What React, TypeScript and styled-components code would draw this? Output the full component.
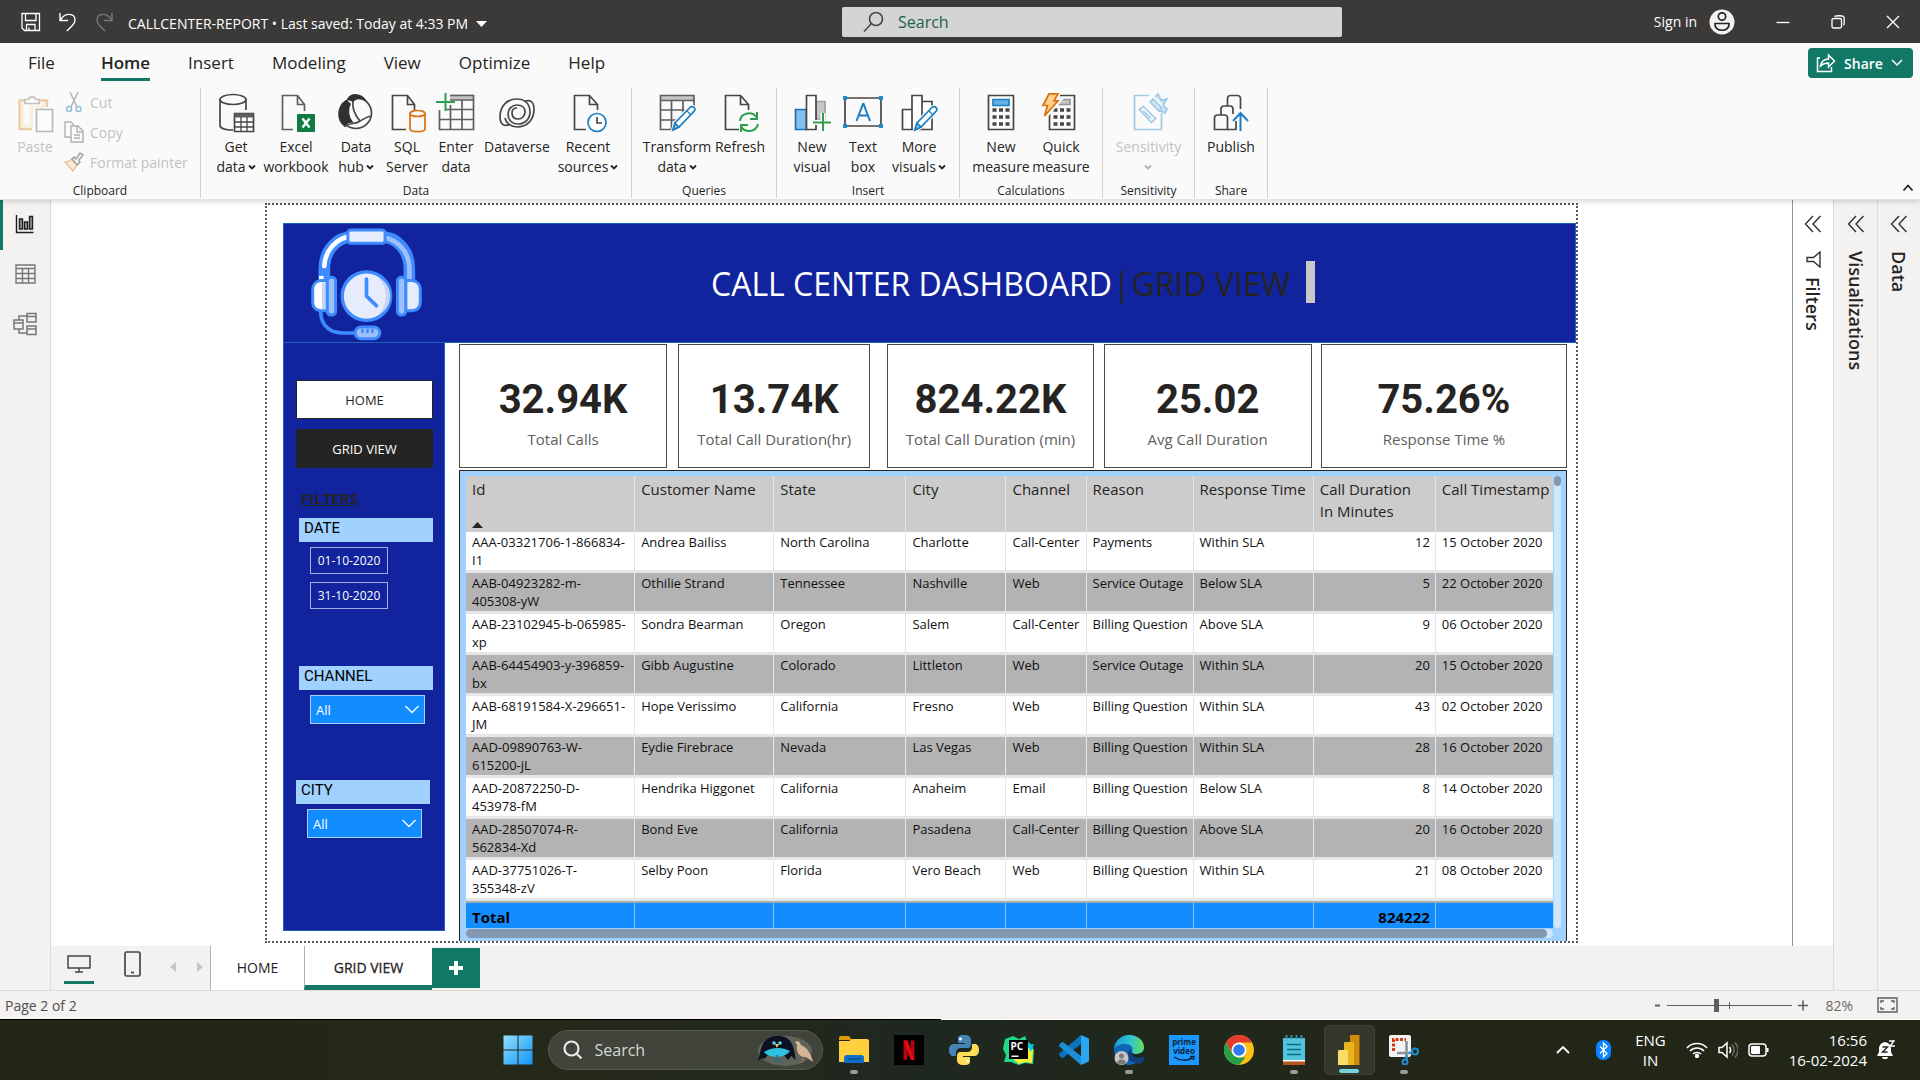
import React from "react";
import styled, { createGlobalStyle, css } from "styled-components";

const ui = `"Open Sans", "Noto Sans", sans-serif`;
const din = `Roboto, "Liberation Sans", sans-serif`;
const green = "#117865";
const navy = "#12239e";
const sky = "#a0d1ff";
const ink = "#252423";

const GlobalStyle = createGlobalStyle`
  *, *::before, *::after { box-sizing: border-box; }
  body { margin: 0; font-family: ${ui}; color: ${ink}; background: #fff; }
  button, input, select { font-family: inherit; margin: 0; }
  button { border: 0; background: none; padding: 0; color: inherit; cursor: pointer; }
  svg { display: block; flex: none; }
`;

const Shell = styled.div`
  display: flex;
  flex-direction: column;
  min-height: 100vh;
`;

/* ---------- title bar ---------- */

const TitleBar = styled.header`
  display: grid;
  grid-template-columns: 842fr 500fr 578fr;
  align-items: center;
  height: 43px;
  background: #3b3a38;
  color: #fff;
  font-size: 14px;
`;

const TitleLeft = styled.div`
  display: flex;
  align-items: center;
  gap: 15px;
  padding-left: 20px;
  white-space: nowrap;
`;

const FileName = styled.button`
  display: flex;
  align-items: center;
  gap: 8px;
  padding-top: 4px;
  font-size: 14px;
  line-height: 20px;
`;

const SearchBox = styled.label`
  display: flex;
  align-items: center;
  gap: 14px;
  height: 30px;
  padding-left: 21px;
  border-radius: 2px;
  background: #d4d4d2;
`;

const SearchInput = styled.input<{ $tone: string }>`
  flex: 1;
  min-width: 0;
  border: 0;
  outline: 0;
  padding: 0;
  background: transparent;
  font-size: 16px;
  line-height: 22px;
  color: ${(p) => p.$tone};
  &::placeholder {
    color: ${(p) => p.$tone};
    opacity: 1;
  }
`;

const TitleRight = styled.div`
  display: flex;
  align-items: center;
  justify-content: flex-end;
  gap: 41px;
  padding-right: 20px;
`;

const SignIn = styled.button`
  display: flex;
  align-items: center;
  gap: 12px;
  font-size: 14px;
`;

/* ---------- ribbon ---------- */

const Ribbon = styled.section`
  position: relative;
  z-index: 1;
  height: 157px;
  background: #fafafa;
  border-bottom: 1px solid #e4e4e4;
  box-shadow: 0 2px 5px rgba(0, 0, 0, 0.14);
`;

const RibbonTop = styled.div`
  display: flex;
  align-items: center;
  justify-content: space-between;
  height: 40px;
  padding: 0 7px 0 28px;
`;

const TabList = styled.nav`
  display: flex;
  gap: 38px;
`;

const RibbonTab = styled.button<{ $active?: boolean }>`
  position: relative;
  font-size: 17px;
  line-height: 24px;
  font-weight: ${(p) => (p.$active ? 600 : 400)};
  margin-left: ${(p) => (p.$active ? 8 : 0)}px;
  ${(p) =>
    p.$active &&
    css`
      &::after {
        content: "";
        position: absolute;
        left: 0;
        right: 0;
        bottom: -6px;
        height: 3px;
        background: ${green};
      }
    `}
`;

const ShareButton = styled.button`
  display: flex;
  align-items: center;
  justify-content: space-between;
  width: 105px;
  height: 30px;
  padding: 0 10px 0 8px;
  border-radius: 4px;
  background: ${green};
  color: #fff;
  font-size: 14px;
  font-weight: 600;
`;

const RibbonBody = styled.div`
  display: flex;
  height: 116px;
  padding: 5px 0 1px;
`;

const Group = styled.section<{ $w: number }>`
  display: flex;
  flex-direction: column;
  justify-content: space-between;
  width: ${(p) => p.$w}px;
  border-right: 1px solid #d2d0ce;
`;

const GroupTools = styled.div<{ $start?: boolean }>`
  display: flex;
  justify-content: ${(p) => (p.$start ? "flex-start" : "center")};
  padding-left: ${(p) => (p.$start ? 10 : 0)}px;
`;

const GroupLabel = styled.div`
  font-size: 12px;
  line-height: 14px;
  text-align: center;
`;

const Tool = styled.button<{ $w: number; $dim?: boolean }>`
  display: flex;
  flex-direction: column;
  align-items: center;
  gap: 4px;
  width: ${(p) => p.$w}px;
  padding-top: 5px;
  font-size: 14px;
  line-height: 20px;
  white-space: nowrap;
  color: ${(p) => (p.$dim ? "#c3c1bf" : ink)};
`;

const ToolText = styled.span`
  display: flex;
  flex-direction: column;
  align-items: center;
`;

const ToolLine = styled.span`
  display: flex;
  align-items: center;
  gap: 2px;
  min-height: 20px;
`;

const MiniTools = styled.div`
  display: flex;
  flex-direction: column;
  padding-left: 4px;
`;

const MiniTool = styled.button`
  display: flex;
  align-items: center;
  gap: 6px;
  height: 30px;
  padding-bottom: 2px;
  font-size: 14px;
  color: #c3c1bf;
`;

const Collapse = styled.button`
  position: absolute;
  right: 6px;
  bottom: 6px;
`;

/* ---------- workspace ---------- */

const Workspace = styled.main`
  display: flex;
  flex: 1;
`;

const Rail = styled.nav`
  display: flex;
  flex-direction: column;
  width: 51px;
  background: #f3f2f1;
  border-right: 1px solid #dddbd9;
`;

const RailButton = styled.button<{ $active?: boolean }>`
  display: flex;
  align-items: center;
  justify-content: center;
  height: 50px;
  padding: 0 3px 2px 0;
  border-left: 3px solid ${(p) => (p.$active ? green : "transparent")};
`;

const Center = styled.div`
  display: flex;
  flex-direction: column;
  flex: 1;
  min-width: 0;
`;

const CanvasRow = styled.div`
  display: flex;
  flex: 1;
`;

const Canvas = styled.div`
  display: flex;
  justify-content: center;
  flex: 1;
  min-width: 0;
  padding: 3px 0;
  background: #fff;
`;

const Page = styled.div`
  display: flex;
  flex-direction: column;
  flex: 0 1 1313px;
  padding: 18px 0 0 16px;
  border: 2px dotted #5a5a5a;
`;

const Banner = styled.div`
  display: flex;
  align-items: center;
  gap: 288px;
  height: 120px;
  padding: 2px 0 0 26px;
  background: ${navy};
  border: 1px solid #1a62bd;
`;

const BannerTitle = styled.h1`
  display: flex;
  align-items: center;
  gap: 1px;
  margin: 0;
  font-size: 32px;
  line-height: 44px;
  font-weight: 400;
  color: #fff;
  white-space: nowrap;
`;

const DarkText = styled.span`
  color: ${ink};
`;

const Marker = styled.span`
  width: 9px;
  height: 42px;
  margin-left: 15px;
  margin-bottom: 4px;
  background: #c8c8c8;
`;

const Report = styled.div`
  display: flex;
  flex: 1;
  gap: 14px;
  padding-right: 9px;
`;

const Side = styled.aside`
  width: 162px;
  margin-bottom: 10px;
  padding: 37px 0 0 12px;
  background: ${navy};
  border: 1px solid #1a62bd;
  border-top: 0;
`;

const NavButtons = styled.div`
  display: flex;
  flex-direction: column;
  gap: 10px;
  width: 137px;
`;

const NavButton = styled.button<{ $dark?: boolean }>`
  height: 39px;
  border: 1px solid ${ink};
  background: ${(p) => (p.$dark ? ink : "#fff")};
  color: ${(p) => (p.$dark ? "#fff" : ink)};
  font-size: 13px;
`;

const SideHeading = styled.h2`
  margin: 19px 0 9px 5px;
  font-size: 15px;
  line-height: 22px;
  font-weight: 700;
  text-decoration: underline;
`;

const Slicer = styled.div<{ $h: number; $indent: number }>`
  height: ${(p) => p.$h}px;
  padding-left: ${(p) => p.$indent}px;
`;

const SlicerTitle = styled.label`
  display: block;
  width: 134px;
  height: 24px;
  padding-left: 5px;
  background: ${sky};
  font-family: ${din};
  font-size: 15px;
  line-height: 20px;
  color: #000;
`;

const SlicerBody = styled.div`
  display: flex;
  flex-direction: column;
  gap: 8px;
  padding: 5px 0 0 11px;
`;

const DateInput = styled.input`
  width: 78px;
  height: 27px;
  padding: 0;
  border: 1px solid #a5aee2;
  background: transparent;
  color: #fff;
  font-size: 12px;
  text-align: center;
`;

const SelectWrap = styled.div`
  position: relative;
  width: 115px;
`;

const Select = styled.select`
  appearance: none;
  width: 100%;
  height: 29px;
  padding: 0 5px;
  border: 1px solid #a9cff8;
  border-radius: 0;
  background: #118dff;
  color: #fff;
  font-size: 13px;
`;

const SelectArrow = styled.span`
  position: absolute;
  right: 6px;
  top: 10px;
  pointer-events: none;
`;

const ReportMain = styled.div`
  display: flex;
  flex-direction: column;
  flex: 1;
  min-width: 0;
  gap: 2px;
  padding-top: 1px;
`;

const Cards = styled.div`
  display: grid;
  grid-template-columns: 219fr 209fr 216fr 217fr 246fr;
`;

const Card = styled.article<{ $gap: number }>`
  display: flex;
  flex-direction: column;
  align-items: center;
  height: 124px;
  margin-right: ${(p) => p.$gap}px;
  padding-top: 31px;
  border: 1px solid #4a4948;
  background: #fff;
  white-space: nowrap;
`;

const CardValue = styled.div`
  font-family: ${din};
  font-size: 40px;
  line-height: 48px;
  font-weight: 700;
`;

const CardLabel = styled.div`
  margin-top: 5px;
  font-size: 15px;
  line-height: 20px;
  color: #605e5c;
`;

const TableVisual = styled.section`
  display: grid;
  grid-template-columns: minmax(0, 1fr) 7px;
  grid-template-rows: auto 10px;
  align-content: start;
  column-gap: 1px;
  flex: 1;
  padding: 5px 5px 0 6px;
  background: ${sky};
  border: 1px solid ${ink};
  border-bottom: 0;
`;

const DataTable = styled.table`
  width: 100%;
  table-layout: fixed;
  border-collapse: separate;
  border-spacing: 0;
  font-size: 13px;
  line-height: 18px;
  color: #111;
`;

const Th = styled.th`
  position: relative;
  height: 56px;
  padding: 2px 0 0 6px;
  vertical-align: top;
  text-align: left;
  font-size: 15px;
  line-height: 22px;
  font-weight: 400;
  white-space: pre-line;
  color: ${ink};
  background: #ccc;
  border-right: 1px solid #e3e6ea;
  &:last-child {
    border-right: 0;
  }
`;

const SortMark = styled.span`
  position: absolute;
  left: 6px;
  bottom: 4px;
`;

const Row = styled.tr<{ $alt?: boolean }>`
  background: ${(p) => (p.$alt ? "#b3b3b3" : "#fff")};
`;

const Td = styled.td<{ $num?: boolean }>`
  height: 41px;
  padding: 1px 5px 0 6px;
  vertical-align: top;
  white-space: nowrap;
  text-align: ${(p) => (p.$num ? "right" : "left")};
  border-right: 1px solid #e3e6ea;
  border-bottom: 3px solid #e6e6e6;
  &:last-child {
    border-right: 0;
  }
`;

const TotalCell = styled.td<{ $num?: boolean }>`
  height: 27px;
  padding: 2px 5px 0 6px;
  font-size: 15px;
  line-height: 22px;
  font-weight: 700;
  color: #000;
  text-align: ${(p) => (p.$num ? "right" : "left")};
  background: #118dff;
  border-top: 2px solid #a6abb0;
  border-right: 1px solid #8cc4f8;
  &:last-child {
    border-right: 0;
  }
`;

const VScroll = styled.div`
  border-radius: 4px;
  background: #cfe6ff;
`;

const VThumb = styled.div`
  height: 10px;
  border-radius: 4px;
  background: #8397b0;
`;

const HScroll = styled.div`
  padding-right: 6px;
  margin-top: 1px;
  height: 9px;
  border-radius: 5px;
  background: #cfe6ff;
`;

const HThumb = styled.div`
  height: 9px;
  border-radius: 5px;
  background: #8397b0;
`;

/* ---------- side panes ---------- */

const Pane = styled.aside<{ $white?: boolean; $w: number }>`
  display: flex;
  flex-direction: column;
  align-items: center;
  gap: 18px;
  width: ${(p) => p.$w}px;
  padding-top: 15px;
  background: ${(p) => (p.$white ? "#fff" : "#f3f2f1")};
  border-left: 1px solid ${(p) => (p.$white ? "#979593" : "#dddbd9")};
`;

const PaneTitle = styled.h3`
  display: flex;
  align-items: center;
  gap: 9px;
  margin: 0;
  writing-mode: vertical-rl;
  font-size: 18px;
  line-height: 24px;
  font-weight: 600;
`;

/* ---------- page tabs ---------- */

const PageBar = styled.div`
  display: flex;
  height: 44px;
  background: #f3f2f1;
`;

const ViewToggles = styled.div`
  display: flex;
  width: 159px;
  padding-left: 13px;
`;

const ViewToggle = styled.button<{ $active?: boolean }>`
  display: flex;
  flex: none;
  justify-content: center;
  align-items: center;
  width: 30px;
  height: 38px;
  margin-right: 23px;
  border-bottom: 3px solid ${(p) => (p.$active ? green : "transparent")};
`;

const Arrow = styled.button`
  display: flex;
  flex: none;
  align-items: center;
  width: 27px;
  height: 42px;
`;

const PageTab = styled.button<{ $w: number; $active?: boolean }>`
  width: ${(p) => p.$w}px;
  padding-top: ${(p) => (p.$active ? 3 : 0)}px;
  padding-bottom: ${(p) => (p.$active ? 0 : 2)}px;
  background: #fff;
  border-left: 1px solid #b3b0ad;
  border-bottom: ${(p) => (p.$active ? 5 : 0)}px solid ${green};
  font-size: 14px;
  -webkit-text-stroke: ${(p) => (p.$active ? "0.3px" : "0")} ${ink};
`;

const AddPage = styled.button`
  display: flex;
  align-items: center;
  justify-content: center;
  width: 48px;
  height: 40px;
  margin-top: 2px;
  background: ${green};
`;

/* ---------- status bar ---------- */

const StatusBar = styled.footer`
  display: flex;
  align-items: center;
  justify-content: space-between;
  height: 29px;
  padding: 0 22px 0 5px;
  background: #f3f2f1;
  border-top: 1px solid #dddbd9;
  font-size: 14px;
  color: #4f4d4b;
`;

const Zoom = styled.div`
  display: flex;
  align-items: center;
  gap: 6px;
`;

const ZoomSlider = styled.input`
  appearance: none;
  width: 125px;
  height: 14px;
  background: linear-gradient(#605e5c, #605e5c) 0 7px / 100% 1px no-repeat,
    linear-gradient(#605e5c, #605e5c) 50% 4px / 1px 7px no-repeat;
  &::-webkit-slider-thumb {
    appearance: none;
    width: 5px;
    height: 13px;
    background: #605e5c;
  }
`;

const ZoomValue = styled.span`
  padding: 0 18px 0 10px;
  color: #6b6967;
`;

/* ---------- taskbar ---------- */

const Taskbar = styled.footer`
  display: grid;
  grid-template-columns: 1fr auto 1fr;
  align-items: center;
  height: 61px;
  padding-top: 1px;
  background: linear-gradient(90deg, #000 49%, #fff 49%) 0 0 / 100% 1px no-repeat,
    linear-gradient(90deg, #222615, #25291a 30%, #1f2820 48%, #232718 75%, #212616);
  color: #fff;
`;

const Dock = styled.div`
  grid-column: 2;
  display: flex;
  align-items: center;
  padding-left: 2px;
`;

const DockApp = styled.button<{ $active?: boolean }>`
  position: relative;
  display: flex;
  align-items: center;
  justify-content: center;
  width: 51px;
  height: 50px;
  margin: 0 2px;
  border-radius: 5px;
  ${(p) =>
    p.$active &&
    css`
      background: #343729;
      border: 1px solid #3e4134;
    `}
`;

const Running = styled.span<{ $on?: boolean }>`
  position: absolute;
  bottom: 1px;
  left: 50%;
  transform: translateX(-50%);
  width: ${(p) => (p.$on ? 20 : 8)}px;
  height: 4px;
  border-radius: 2px;
  background: ${(p) => (p.$on ? "#76d3de" : "#9b9c97")};
`;

const TaskSearch = styled.label`
  display: flex;
  align-items: center;
  gap: 12px;
  width: 275px;
  height: 40px;
  margin: 0 4px 0 2px;
  padding: 0 7px 0 14px;
  border-radius: 20px;
  background: #40443a;
  border: 1px solid #55594e;
`;

const Tray = styled.div`
  grid-column: 3;
  display: flex;
  align-items: center;
  justify-content: flex-end;
  gap: 10px;
  padding-right: 25px;
  font-size: 15px;
  line-height: 20px;
`;

const TrayStack = styled.div<{ $right?: boolean }>`
  padding: ${(p) => (p.$right ? "0 0 0 10px" : "0 4px")};
  text-align: ${(p) => (p.$right ? "right" : "center")};
`;

/* ---------- drawings ---------- */

const Caret = ({ color = ink }: { color?: string }) => (
  <svg width="8" height="8" viewBox="0 0 8 8" fill="none" stroke={color} strokeWidth="1.8">
    <path d="M1 2.5 4 5.5 7 2.5" />
  </svg>
);

const Chevrons = () => (
  <svg width="18" height="18" viewBox="0 0 18 18" fill="none" stroke="#323130" strokeWidth="1.4">
    <path d="M9 1 1.5 9 9 17M16.500 1 9 9l7.500 8" />
  </svg>
);

const Big = ({ children }: { children: React.ReactNode }) => (
  <svg width="40" height="40" viewBox="0 0 40 40" fill="none" stroke="#484644" strokeWidth="1.7">
    {children}
  </svg>
);

const pencil = (
  <>
    <path d="M16 37 18 30 33 14.500a2.600 2.600 0 0 1 4 3.800L22 34z" fill="#fff" stroke="#fafafa" strokeWidth="4" />
    <path d="M16 37 18 30 33 14.500a2.600 2.600 0 0 1 4 3.800L22 34z" fill="#fff" stroke="#1c7fc4" />
    <path d="M16 37 18 30 22 34z" fill="#83beec" stroke="#1c7fc4" />
    <path d="m30 18 3.500 3.500" stroke="#1c7fc4" strokeWidth="1.2" />
  </>
);

const filePath = "M17 36.500H6.500V2.500h15l7 9V18M21.500 2.500v9h7";

const icons: Record<string, React.ReactNode> = {
  paste: (
    <Big>
      <g opacity=".5">
        <path d="M17 36H4.500V7.500h7M22 7.500h10V14" stroke="#e3a04f" strokeWidth="2.400" />
        <path d="M7.500 10v23h9V14h12v-4" stroke="#fbe6c0" strokeWidth="3" />
        <path d="M10 10.500V6.500h3.500a3.800 3.800 0 0 1 7.200 0h3.500v4z" fill="#fff" stroke="#8a8886" />
        <path d="M21.500 16.500h16v22h-16z" fill="#fff" stroke="#797775" />
      </g>
    </Big>
  ),
  getData: (
    <Big>
      <ellipse cx="17" cy="6.500" rx="13" ry="5" />
      <path d="M4 6.500v26c0 2.500 5 4.500 13 4.500M30 6.500V17" />
      <path d="M18.500 20.500h19v18h-19z" fill="#fff" />
      <path d="M18.500 22.500h19" strokeWidth="4" stroke="#605e5c" />
      <path d="M18.500 29h19M18.500 34h19M25 24v14M31 24v14" strokeWidth="1.300" />
    </Big>
  ),
  excel: (
    <Big>
      <path d={filePath} stroke="#605e5c" />
      <rect x="21" y="21" width="18" height="18" rx="1" fill="#107c41" stroke="none" />
      <path d="m26.500 25.500 7 9M33.500 25.500l-7 9" stroke="#fff" strokeWidth="2.400" />
    </Big>
  ),
  hub: (
    <Big>
      <circle cx="20" cy="20" r="15.500" />
      <path d="M12 6C16 0 25 1 29 7c-4-2-9-2-12 1-2-1-4-1.500-5-2z" fill="#323130" stroke="#323130" />
      <path d="M10 8C2 13 0 26 9 33c1-3 4-4 7-4-4-5-5-13-2-18-1-1-2-2-4-3z" fill="#323130" stroke="#323130" />
      <path d="M17 8c-1 7 1 13 7 20M9 33c7-4 10-1 15-5 4-2 8-5 12-5" />
    </Big>
  ),
  sql: (
    <Big>
      <path d="M19 36.500H5.500V2.500h15l7 9V17M20.500 2.500v9h7" />
      <ellipse cx="30.500" cy="20.500" rx="7.500" ry="3" stroke="#d9700f" />
      <path d="M23 20.500V36c0 3.500 15 3.500 15 0V20.500" stroke="#d9700f" />
    </Big>
  ),
  enter: (
    <Big>
      <path d="M14 4h23" strokeWidth="5" stroke="#c8c6c4" />
      <path d="M14 2.500h23.500v34h-34V17M3.500 26.500h34M10 16.500h27.500M14.500 12v24M26 7v29M14 7h23" stroke="#605e5c" />
      <path d="M9.500 0v18M0 9h19" stroke="#2f9e4f" strokeWidth="2" />
    </Big>
  ),
  dataverse: (
    <Big>
      <path d="M12.500 31.500C7 34 3 31 3 24 3 13 10 6 20 6c8 0 13 5 13 13 0 7-5 12-12 12-6 0-10-4-10-10 0-5 4-9 9-9s8 3 8 7-3 7-7 7-6-2-6-6c0-3 2-5 5-5" />
      <path d="M27.500 8.500C33 6 37 9 37 16c0 11-7 18-17 18-6 0-11-4-12-9" />
    </Big>
  ),
  recent: (
    <Big>
      <path d="M18 36.500H6.500V2.500h15l8 9V17M21.500 2.500v9h8" />
      <circle cx="29" cy="29.500" r="9" fill="#fff" stroke="#1c7fc4" />
      <path d="M29 24v6h5" />
    </Big>
  ),
  transform: (
    <Big>
      <path d="M3 4.500h34" strokeWidth="5" stroke="#c8c6c4" />
      <path d="M18 36.500H3.500v-34h33.500V16M3.500 7.500h33.500M3.500 17h24M3.500 27h16M14.500 7.500V36M26 7.500V22" stroke="#605e5c" />
      {pencil}
    </Big>
  ),
  refresh: (
    <Big>
      <path d="M19 36.500H5.500V2.500h15l8 9V17M20.500 2.500v9h8" />
      <path d="M20 28c1-9 13-10 17-3M37 19v7h-7M38 31c-2 9-14 9-17 2M21 39v-7h7" stroke="#2f9e4f" strokeWidth="2" />
    </Big>
  ),
  newVisual: (
    <Big>
      <path d="M24 8.500h9V26h-9z" fill="#c8c6c4" stroke="#a19f9d" />
      <path d="M3.500 16.500h11v20h-11z" fill="#83beec" stroke="#1c6fb5" />
      <path d="M14.500 2.500h9.500v34h-9.500z" fill="#fff" />
      <path d="M31 20v18M21 29.500h18" stroke="#fafafa" strokeWidth="5" />
      <path d="M31 20v18M21 29.500h18" stroke="#2f9e4f" strokeWidth="2" />
    </Big>
  ),
  textBox: (
    <Big>
      <path d="M2 5h36v28H2z" />
      <path d="m13.500 28 6.500-17h.6L27 28M15.500 22.500h9.500" stroke="#1c7fc4" strokeWidth="2" />
      <path d="M0 3h4v4H0zM36 3h4v4h-4zM0 31h4v4H0zM36 31h4v4h-4z" fill="#1c8ad1" stroke="none" />
    </Big>
  ),
  moreVisuals: (
    <Big>
      <path d="M3.500 16.500h9.500v20H3.500zM13 2.500h10v34H13zM23 8.500h10v28H23z" fill="#fff" />
      {pencil}
    </Big>
  ),
  calc: (
    <Big>
      <path d="M7.500 2.500h25v34h-25z" />
      <path d="M12 6.500h16v6H12z" fill="#69afe5" stroke="#1c7fc4" />
      <path d="M11.500 17h17M11.500 24h17M11.500 31h17" strokeWidth="3.600" strokeDasharray="4 2.500" />
    </Big>
  ),
  quick: (
    <Big>
      <path d="M8.500 2.500h25v34h-25z" />
      <path d="M15 6.500h14v5H15z" fill="#c8c6c4" stroke="#979593" />
      <path d="M12.500 17h17M12.500 24h17M12.500 31h17" strokeWidth="3.600" strokeDasharray="4 2.500" />
      <path d="M8 0h10l-4 7h5L3 25l3-12H1z" fill="#ffd28a" stroke="#fafafa" strokeWidth="4" />
      <path d="M8 .8h9l-4 7h4L3.500 23l3-10.500H2z" fill="#ffd28a" stroke="#d9700f" />
    </Big>
  ),
  sensitivity: (
    <Big>
      <g stroke="#9fcbe6">
        <path d="M20 2.500H5.500v34h27V20" />
        <path d="m10.500 16.500 4-3 12 12-4 4z" />
        <path d="m14 17.500 8 8" />
        <path d="m21 9 9 9 3-3-9-9zM26 4l3-3 3 6 6-1-4 6M30 17l6 3 2-4-4-4" fill="#cfe6f3" />
      </g>
    </Big>
  ),
  publish: (
    <Big>
      <path d="M3.500 36.500V25a3 3 0 0 1 3-3h7a3 3 0 0 1 3 3v11.500z" />
      <path d="M10 22v-6a3 3 0 0 1 3-3h6a3 3 0 0 1 3 3v5M16.500 13V5.500a3 3 0 0 1 3-3h7a3 3 0 0 1 3 3V16M16.500 36.500H25V28" />
      <path d="M29.500 38V20.500M22 28l7.500-8 7.500 8" stroke="#1c7fc4" strokeWidth="2" />
    </Big>
  ),
};

const CutIcon = () => (
  <svg width="20" height="22" viewBox="0 0 20 22" fill="none" stroke="#b3b0ad" strokeWidth="1.400">
    <path d="m6 1 7 15M14 1 7 16" />
    <circle cx="5" cy="18" r="2.500" stroke="#93bfdc" />
    <circle cx="14.500" cy="18" r="2.500" stroke="#93bfdc" />
  </svg>
);
const CopyIcon = () => (
  <svg width="20" height="22" viewBox="0 0 20 22" fill="none" stroke="#b3b0ad" strokeWidth="1.400">
    <path d="M7 16H1V1h6l3 3M7 5h7l5 5v11H7zM13 5v6h6M10 14h6M10 17h6" />
  </svg>
);
const BrushIcon = () => (
  <svg width="20" height="22" viewBox="0 0 20 22" fill="none" strokeWidth="1.400">
    <path d="M1 11c3 0 5-1 7-3l5 6c-1 2-3 4-4 6z" stroke="#ecc49a" fill="#fbead6" />
    <path d="m8 8 2-2 2 2 4-6 3 2-4 5 1 2-3 3z" stroke="#a19f9d" fill="#f3f2f1" />
  </svg>
);

const Headset = () => (
  <svg width="113" height="113" viewBox="930 82 340 340" fill="none" stroke="#3e8bff" strokeLinecap="round" strokeLinejoin="round" role="img" aria-label="Headset with clock">
    <path d="M973 245V205C973 150 1010 108 1062 108H1140C1192 108 1229 150 1229 205V245" strokeWidth="35" strokeLinecap="butt" />
    <path d="M973 196C975 150 1010 112 1050 108" stroke="#fff" strokeWidth="14" />
    <path d="M1150 110C1195 118 1229 155 1229 205V240" stroke="#9fbffb" strokeWidth="14" />
    <path d="M964 226v12" stroke="#fff" strokeWidth="14" strokeLinecap="butt" />
    <rect x="1044" y="88" width="112" height="40" rx="9" fill="#e6ecfb" strokeWidth="9" />
    <path d="M982 240H962C946 242 938 254 938 268V304C938 320 946 330 962 331H982z" fill="#fff" strokeWidth="9" />
    <path d="M966 246h12v80h-12z" fill="#c5d4fa" stroke="none" />
    <rect x="982" y="230" width="25" height="114" rx="11" fill="#9fbffb" strokeWidth="9" />
    <path d="M1218 240h20c16 2 24 14 24 28v36c0 16-8 26-24 27h-20z" fill="#e6ecfb" strokeWidth="9" />
    <rect x="1193" y="230" width="25" height="114" rx="11" fill="#9fbffb" strokeWidth="9" />
    <circle cx="1100" cy="287" r="73" fill="#e6ecfb" strokeWidth="10" />
    <path d="M1134 231c32 25 32 86 0 112 50-20 50-92 0-112z" fill="#c5d4fa" stroke="none" />
    <path d="M1100 236V287L1130 316" strokeWidth="11" />
    <path d="M962 336C964 378 992 398 1030 398H1066" strokeWidth="11" />
    <rect x="1066" y="380" width="74" height="35" rx="17" fill="#9fbffb" strokeWidth="9" />
    <path d="M1088 389v6M1103 389v6M1118 389v6" strokeWidth="8" />
  </svg>
);

const WindowsLogo = () => (
  <svg width="30" height="30" viewBox="0 0 30 30">
    <defs>
      <linearGradient id="win" x1="0" y1="0" x2="1" y2="1">
        <stop offset="0" stopColor="#8fe3ff" />
        <stop offset="1" stopColor="#1293f5" />
      </linearGradient>
    </defs>
    <path d="M.5.500h14v14H.500zM15.500.500h14v14h-14zM.500 15.500h14v14H.500zM15.500 15.500h14v14h-14z" fill="url(#win)" />
  </svg>
);

const Birds = () => (
  <svg width="58" height="32" viewBox="0 0 58 32">
    <ellipse cx="28" cy="17" rx="27" ry="15" fill="#77786a" opacity=".6" />
    <path d="M1 27C4 18 3 3 20 2c17-1 17 15 19 24l-5-4-3 4-5-6H12l-5 5-2-1z" fill="#0b1122" />
    <path d="M7 18c8-5 18-5 26-1-4 7-21 8-26 1z" fill="#2fc0e0" />
    <circle cx="17" cy="9" r="1.800" fill="#53d6ee" />
    <circle cx="23" cy="9" r="1.800" fill="#53d6ee" />
    <path d="m18 10 2 4 2-4z" fill="#f2d04d" />
    <path d="M20 21v4l-4 3M20 25l3 1v5" stroke="#2c6d8d" strokeWidth="1.500" fill="none" />
    <path d="M38 8c3-2 5 0 6 3 7 3 10 9 12 17l-7-5c-7 1-10-6-9-12z" fill="#d6b596" />
    <path d="M46 24v4l-4 1" stroke="#9a7657" fill="none" />
  </svg>
);

const Folder = () => (
  <svg width="30" height="28" viewBox="0 0 30 28">
    <path d="M0 2a2 2 0 0 1 2-2h8l3 4H0z" fill="#d99a06" />
    <path d="M0 5h10l3-2h15a2 2 0 0 1 2 2v21H0z" fill="#ffcf3f" />
    <path d="M5 27v-5a3 3 0 0 1 3-3h14a3 3 0 0 1 3 3v5z" fill="#0f6fc5" />
    <path d="M9 23h12" stroke="#0a4d91" strokeWidth="1.500" />
  </svg>
);

const Netflix = () => (
  <svg width="30" height="30" viewBox="0 0 30 30">
    <path d="M0 0h30v30H0z" />
    <path d="M9.500 5.500h4v19l-4 .5zM16.500 5.500h4V25l-4-.5z" fill="#b1060f" />
    <path d="M9.500 5.500h4l7 19.500-4-.5z" fill="#e50914" />
  </svg>
);

const Python = () => (
  <svg width="30" height="30" viewBox="0 0 30 30">
    <path d="M15 0c-6 0-6 2-6 5v3h7v1H5C2 9 0 11 0 15s2 6 4 6h3v-3c0-3 2-5 5-5h7c2 0 3-2 3-4V5c0-3-2-5-7-5z" fill="#4584b6" />
    <path d="M15 30c6 0 6-2 6-5v-3h-7v-1h11c3 0 5-2 5-6s-2-6-4-6h-3v3c0 3-2 5-5 5h-7c-2 0-3 2-3 4v4c0 3 2 5 7 5z" fill="#ffde57" />
    <circle cx="11.500" cy="4" r="1.400" fill="#fff" />
    <circle cx="18.500" cy="26" r="1.400" fill="#fff" />
  </svg>
);

const PyCharm = () => (
  <svg width="32" height="30" viewBox="0 0 32 30">
    <path d="m2 4 8-3 6 3 6-3 2 5 5 4 2 5-1 14-8-1-6 2-8-3H1l2-7-3-6z" fill="#21d789" />
    <path d="m24 10 6 5-1 13-7-1-6 2-5-4z" fill="#f5ee38" />
    <path d="m24 10 7-1-3 8z" fill="#07c3f2" />
    <path d="M6 5h19v19H6z" />
    <text x="7.500" y="15" fontFamily="Open Sans, sans-serif" fontSize="10" fontWeight="700" fill="#fff">PC</text>
    <path d="M8.500 20.500h7V22h-7z" fill="#fff" />
  </svg>
);

const VsCode = () => (
  <svg width="30" height="30" viewBox="0 0 30 30">
    <path d="M22 0v9L4.500 22.500c-1 .6-2 .4-2.600-.3L.5 20.500c-.6-.7-.5-1.600.2-2.200z" fill="#0a74bf" />
    <path d="M22 30v-9L4.500 7.500c-1-.6-2-.4-2.600.3L.5 9.500c-.6.700-.5 1.600.2 2.200z" fill="#1b8fd8" />
    <path d="m22 0 8 3.500v23L22 30z" fill="#2aa6f2" />
  </svg>
);

const Edge = () => (
  <svg width="30" height="30" viewBox="0 0 30 30">
    <defs>
      <linearGradient id="edge" x1="0" x2="1">
        <stop offset="0" stopColor="#1a9be0" />
        <stop offset=".6" stopColor="#35c6c9" />
        <stop offset="1" stopColor="#6ae05a" />
      </linearGradient>
    </defs>
    <circle cx="15" cy="15" r="15" fill="#0d67b5" />
    <path d="M0 14C1 5 8 0 15 0c9 0 15 6 15 12 0 5-4 7-8 7-3 0-5-1-4-3 2-3-1-7-6-7C6 9 1 11 0 14z" fill="url(#edge)" />
    <path d="M18 16c-1 3 1 5 6 5 2 0 5-1 6-3l1 6-5 5-8-2c-5-3-5-9-2-13z" fill="#12407f" />
    <path d="M18 16c-1 2 1 3 4 3 4 0 8-2 8-5l2 5-3 3c-3 1-6 1-8 0-3-1-5-4-3-6z" fill="#1f2820" />
    <circle cx="7.500" cy="23" r="7" fill="#c9c7c5" />
    <circle cx="7.500" cy="21" r="2.500" fill="#7d7b79" />
    <path d="M3 28c1-5 8-5 9 0-3 2-6 2-9 0z" fill="#7d7b79" />
  </svg>
);

const Prime = () => (
  <svg width="30" height="30" viewBox="0 0 30 30">
    <path d="M0 0h30v30H0z" fill="#1a98ff" />
    <text x="15" y="10" textAnchor="middle" fontFamily="Open Sans, sans-serif" fontSize="8" fontWeight="700" fill="#0b1e33">prime</text>
    <text x="15" y="19" textAnchor="middle" fontFamily="Open Sans, sans-serif" fontSize="8" fontWeight="700" fill="#0b1e33">video</text>
    <path d="M5 22c6 4 13 4 18 1M21 21.500l4 0-1 3.500" stroke="#0b1e33" strokeWidth="1.500" fill="none" />
  </svg>
);

const Chrome = () => (
  <svg width="30" height="30" viewBox="0 0 30 30">
    <circle cx="15" cy="15" r="15" fill="#fbc116" />
    <path d="M2 7.500A15 15 0 0 1 28 7.500H15l-6.500 11z" fill="#e33b2e" />
    <path d="M2 7.500 8.500 18.700 15 22.500h6.500L15 30A15 15 0 0 1 2 7.500z" fill="#269f49" />
    <circle cx="15" cy="15" r="7.500" fill="#fff" />
    <circle cx="15" cy="15" r="5.800" fill="#2f7bf0" />
  </svg>
);

const Notepad = () => (
  <svg width="24" height="30" viewBox="0 0 24 30">
    <path d="M1 25h22v5H1z" fill="#b4561f" />
    <path d="M1 3h22v22.500H1z" fill="#53c4de" />
    <path d="M1 25h22v1.500H1z" fill="#fff" />
    <path d="M4.500 0v4M9.500 0v4M14.500 0v4M19.500 0v4" stroke="#2a92ad" strokeWidth="2" />
    <path d="M5 9.500h14M5 14.500h14M5 19.500h14" stroke="#0c6c86" strokeWidth="1.700" />
  </svg>
);

const PowerBi = () => (
  <svg width="24" height="30" viewBox="0 0 24 30">
    <path d="M13 0h9.500v30H13z" fill="#d18b0c" />
    <path d="M7 8a1 1 0 0 1 1-1h9v23H7z" fill="#e9b51f" />
    <path d="M1 16a1 1 0 0 1 1-1h9v15H1z" fill="#f7dc6a" />
  </svg>
);

const Snip = () => (
  <svg width="30" height="30" viewBox="0 0 30 30" fill="none">
    <rect width="22" height="22" rx="2" fill="#f3f3f5" />
    <path d="M4.500 16V4.500H17" stroke="#d13a12" strokeWidth="3" strokeDasharray="3 1.500" />
    <path d="M17.500 6v18M8 18h15" stroke="#8b9096" strokeWidth="2.500" />
    <circle cx="26" cy="16.500" r="3" stroke="#1b8fd8" strokeWidth="2" />
    <circle cx="16" cy="27" r="2.500" stroke="#1b8fd8" strokeWidth="2" />
    <path d="M17.500 20v5M20 18l4-1" stroke="#1b8fd8" strokeWidth="2" />
  </svg>
);

/* ---------- data ---------- */

type ToolSpec = { icon: string; w: number; lines: string[]; caret?: boolean; dim?: boolean };

const groups: { name: string; w: number; tools: ToolSpec[] }[] = [
  {
    name: "Data",
    w: 431,
    tools: [
      { icon: "getData", w: 60, lines: ["Get", "data"], caret: true },
      { icon: "excel", w: 60, lines: ["Excel", "workbook"] },
      { icon: "hub", w: 60, lines: ["Data", "hub"], caret: true },
      { icon: "sql", w: 42, lines: ["SQL", "Server"] },
      { icon: "enter", w: 56, lines: ["Enter", "data"] },
      { icon: "dataverse", w: 66, lines: ["Dataverse"] },
      { icon: "recent", w: 76, lines: ["Recent", "sources"], caret: true },
    ],
  },
  {
    name: "Queries",
    w: 145,
    tools: [
      { icon: "transform", w: 72, lines: ["Transform", "data"], caret: true },
      { icon: "refresh", w: 54, lines: ["Refresh"] },
    ],
  },
  {
    name: "Insert",
    w: 183,
    tools: [
      { icon: "newVisual", w: 50, lines: ["New", "visual"] },
      { icon: "textBox", w: 52, lines: ["Text", "box"] },
      { icon: "moreVisuals", w: 60, lines: ["More", "visuals"], caret: true },
    ],
  },
  {
    name: "Calculations",
    w: 143,
    tools: [
      { icon: "calc", w: 60, lines: ["New", "measure"] },
      { icon: "quick", w: 60, lines: ["Quick", "measure"] },
    ],
  },
  { name: "Sensitivity", w: 92, tools: [{ icon: "sensitivity", w: 72, lines: ["Sensitivity", ""], caret: true, dim: true }] },
  { name: "Share", w: 73, tools: [{ icon: "publish", w: 60, lines: ["Publish"] }] },
];

const cards = [
  { value: "32.94K", label: "Total Calls", gap: 11 },
  { value: "13.74K", label: "Total Call Duration(hr)", gap: 17 },
  { value: "824.22K", label: "Total Call Duration (min)", gap: 10 },
  { value: "25.02", label: "Avg Call Duration", gap: 9 },
  { value: "75.26%", label: "Response Time %", gap: 0 },
];

const columns = [
  { name: "Id", w: 169 },
  { name: "Customer Name", w: 139 },
  { name: "State", w: 132 },
  { name: "City", w: 100 },
  { name: "Channel", w: 80 },
  { name: "Reason", w: 107 },
  { name: "Response Time", w: 120 },
  { name: "Call Duration\nIn Minutes", w: 122 },
  { name: "Call Timestamp", w: 117 },
];

const rows: string[][] = [
  ["AAA-03321706-1-866834-", "I1", "Andrea Bailiss", "North Carolina", "Charlotte", "Call-Center", "Payments", "Within SLA", "12", "15 October 2020"],
  ["AAB-04923282-m-", "405308-yW", "Othilie Strand", "Tennessee", "Nashville", "Web", "Service Outage", "Below SLA", "5", "22 October 2020"],
  ["AAB-23102945-b-065985-", "xp", "Sondra Bearman", "Oregon", "Salem", "Call-Center", "Billing Question", "Above SLA", "9", "06 October 2020"],
  ["AAB-64454903-y-396859-", "bx", "Gibb Augustine", "Colorado", "Littleton", "Web", "Service Outage", "Within SLA", "20", "15 October 2020"],
  ["AAB-68191584-X-296651-", "JM", "Hope Verissimo", "California", "Fresno", "Web", "Billing Question", "Within SLA", "43", "02 October 2020"],
  ["AAD-09890763-W-", "615200-jL", "Eydie Firebrace", "Nevada", "Las Vegas", "Web", "Billing Question", "Within SLA", "28", "16 October 2020"],
  ["AAD-20872250-D-", "453978-fM", "Hendrika Higgonet", "California", "Anaheim", "Email", "Billing Question", "Below SLA", "8", "14 October 2020"],
  ["AAD-28507074-R-", "562834-Xd", "Bond Eve", "California", "Pasadena", "Call-Center", "Billing Question", "Above SLA", "20", "16 October 2020"],
  ["AAD-37751026-T-", "355348-zV", "Selby Poon", "Florida", "Vero Beach", "Web", "Billing Question", "Within SLA", "21", "08 October 2020"],
];

const dockApps: { name: string; icon: React.ReactNode; running?: boolean; active?: boolean }[] = [
  { name: "File Explorer", icon: <Folder />, running: true },
  { name: "Netflix", icon: <Netflix /> },
  { name: "Python", icon: <Python /> },
  { name: "PyCharm", icon: <PyCharm /> },
  { name: "VS Code", icon: <VsCode /> },
  { name: "Edge", icon: <Edge />, running: true },
  { name: "Prime Video", icon: <Prime /> },
  { name: "Chrome", icon: <Chrome /> },
  { name: "Notepad", icon: <Notepad />, running: true },
  { name: "Power BI", icon: <PowerBi />, running: true, active: true },
  { name: "Snipping Tool", icon: <Snip />, running: true },
];

/* ---------- sections ---------- */

const AllSelect = ({ id }: { id: string }) => (
  <SelectWrap>
    <Select id={id} defaultValue="All">
      <option>All</option>
    </Select>
    <SelectArrow>
      <svg width="14" height="9" viewBox="0 0 14 9" fill="none" stroke="#fff" strokeWidth="1.300">
        <path d="m.5 1 6.500 6.500L13.500 1" />
      </svg>
    </SelectArrow>
  </SelectWrap>
);

const Title = () => (
  <TitleBar>
    <TitleLeft>
      <button aria-label="Save">
        <svg width="21" height="20" viewBox="0 0 21 20" fill="none" stroke="#fff" strokeWidth="1.300">
          <path d="M2 1.500h17.500v17H4.500L2 16zM5.500 1.500v7h10.500v-7M6.500 18.500v-6h8.500v6M9 15.500v3" />
        </svg>
      </button>
      <button aria-label="Undo">
        <svg width="21" height="20" viewBox="0 0 21 20" fill="none" stroke="#fff" strokeWidth="1.400">
          <path d="M4 1v7.500h8M4.500 8C9 0 19 1 19 8c0 5-5 7-8 11" />
        </svg>
      </button>
      <button aria-label="Redo">
        <svg width="21" height="20" viewBox="0 0 21 20" fill="none" stroke="#797775" strokeWidth="1.400">
          <path d="M20 1v7.500h-8M19.500 8C15 0 5 1 5 8c0 5 5 7 8 11" />
        </svg>
      </button>
      <FileName>
        CALLCENTER-REPORT • Last saved: Today at 4:33 PM
        <svg width="11" height="6" viewBox="0 0 11 6" fill="#fff">
          <path d="M0 0h11L5.500 6z" />
        </svg>
      </FileName>
    </TitleLeft>
    <SearchBox>
      <svg width="21" height="22" viewBox="0 0 21 22" fill="none" stroke="#484644" strokeWidth="1.600">
        <circle cx="13" cy="8" r="6.500" />
        <path d="m8.500 12.500-7.500 8" />
      </svg>
      <SearchInput $tone="#215f51" placeholder="Search" aria-label="Search the report" />
    </SearchBox>
    <TitleRight>
      <SignIn>
        Sign in
        <svg width="26" height="26" viewBox="0 0 26 26" fill="none" stroke="#252423" strokeWidth="1.700">
          <circle cx="13" cy="13" r="12.500" fill="#f3f2f1" stroke="none" />
          <circle cx="13" cy="7.500" r="3.700" />
          <path d="M6 14.500h14c1 9-15 9-14 0z" />
        </svg>
      </SignIn>
      <button aria-label="Minimize">
        <svg width="14" height="14" viewBox="0 0 14 14" stroke="#fff" strokeWidth="1.300">
          <path d="M.5 7.500h13" />
        </svg>
      </button>
      <button aria-label="Restore">
        <svg width="14" height="14" viewBox="0 0 14 14" fill="none" stroke="#fff" strokeWidth="1.300">
          <rect x="1" y="3.500" width="9.500" height="9.500" rx="1.500" />
          <path d="M3.500 1.500c1-1 8-1 9 0s1 7 0 9" />
        </svg>
      </button>
      <button aria-label="Close">
        <svg width="14" height="14" viewBox="0 0 14 14" stroke="#fff" strokeWidth="1.300">
          <path d="m1 1 12 12M13 1 1 13" />
        </svg>
      </button>
    </TitleRight>
  </TitleBar>
);

const RibbonBar = () => (
  <Ribbon>
    <RibbonTop>
      <TabList>
        {["File", "Home", "Insert", "Modeling", "View", "Optimize", "Help"].map((t) => (
          <RibbonTab key={t} $active={t === "Home"}>
            {t}
          </RibbonTab>
        ))}
      </TabList>
      <ShareButton>
        <svg width="20" height="20" viewBox="0 0 20 20" fill="none" stroke="#fff" strokeWidth="1.500">
          <path d="M4 5H1.500v13.500h14V14M4.500 13c1-5 4-7 8-7V2l6 6-6 6v-4c-3 0-6 1-8 3z" />
        </svg>
        Share
        <svg width="12" height="8" viewBox="0 0 12 8" fill="none" stroke="#fff" strokeWidth="1.500">
          <path d="m1 1 5 5 5-5" />
        </svg>
      </ShareButton>
    </RibbonTop>
    <RibbonBody>
      <Group $w={201}>
        <GroupTools $start>
          <Tool $w={50} $dim>
            {icons.paste}
            Paste
          </Tool>
          <MiniTools>
            <MiniTool>
              <CutIcon />
              Cut
            </MiniTool>
            <MiniTool>
              <CopyIcon />
              Copy
            </MiniTool>
            <MiniTool>
              <BrushIcon />
              Format painter
            </MiniTool>
          </MiniTools>
        </GroupTools>
        <GroupLabel>Clipboard</GroupLabel>
      </Group>
      {groups.map((g) => (
        <Group key={g.name} $w={g.w}>
          <GroupTools>
            {g.tools.map((t) => (
              <Tool key={t.icon} $w={t.w} $dim={t.dim}>
                {icons[t.icon]}
                <ToolText>
                  {t.lines.map((line, i) => (
                    <ToolLine key={i}>
                      {line}
                      {t.caret && i === t.lines.length - 1 && <Caret color={t.dim ? "#b3b0ad" : ink} />}
                    </ToolLine>
                  ))}
                </ToolText>
              </Tool>
            ))}
          </GroupTools>
          <GroupLabel>{g.name}</GroupLabel>
        </Group>
      ))}
    </RibbonBody>
    <Collapse aria-label="Collapse ribbon">
      <svg width="12" height="12" viewBox="0 0 12 12" fill="none" stroke={ink} strokeWidth="1.800">
        <path d="m1.500 9.500 4.500-5 4.500 5" />
      </svg>
    </Collapse>
  </Ribbon>
);

const ViewRail = () => (
  <Rail>
    <RailButton $active aria-label="Report view">
      <svg width="20" height="20" viewBox="0 0 20 20" fill="#a19f9d" stroke="#201f1e" strokeWidth="1.400">
        <path d="M1.500 1v17.500h17" fill="none" />
        <path d="M4.500 5h3v10h-3zM9.500 8h3v7h-3zM14.500 2.500h3V15h-3z" />
      </svg>
    </RailButton>
    <RailButton aria-label="Table view">
      <svg width="21" height="20" viewBox="0 0 21 20" fill="none" stroke="#797775" strokeWidth="1.400">
        <path d="M1 1h19v18H1zM1 4.500h19M1 9.500h19M1 14.500h19M7.500 4.500V19M13.500 4.500V19" />
      </svg>
    </RailButton>
    <RailButton aria-label="Model view">
      <svg width="24" height="24" viewBox="0 0 24 24" fill="none" stroke="#797775" strokeWidth="1.500">
        <path d="M1 8h9v9H1zM14 1.500h9V10h-9zM14 14h9v8.500h-9zM1 11h9M14 4.500h9M14 17h9M6 8V4h8M6 17v4h8" />
      </svg>
    </RailButton>
  </Rail>
);

const ReportPage = () => (
  <Page>
    <Banner>
      <Headset />
      <BannerTitle>
        CALL CENTER DASHBOARD
        <DarkText>|</DarkText>
        <DarkText>GRID VIEW</DarkText>
        <Marker />
      </BannerTitle>
    </Banner>
    <Report>
      <Side>
        <NavButtons>
          <NavButton>HOME</NavButton>
          <NavButton $dark>GRID VIEW</NavButton>
        </NavButtons>
        <SideHeading>FILTERS</SideHeading>
        <Slicer $h={148} $indent={3}>
          <SlicerTitle htmlFor="from">DATE</SlicerTitle>
          <SlicerBody>
            <DateInput id="from" defaultValue="01-10-2020" />
            <DateInput aria-label="To date" defaultValue="31-10-2020" />
          </SlicerBody>
        </Slicer>
        <Slicer $h={114} $indent={3}>
          <SlicerTitle htmlFor="channel">CHANNEL</SlicerTitle>
          <SlicerBody>
            <AllSelect id="channel" />
          </SlicerBody>
        </Slicer>
        <Slicer $h={60} $indent={0}>
          <SlicerTitle htmlFor="city">CITY</SlicerTitle>
          <SlicerBody>
            <AllSelect id="city" />
          </SlicerBody>
        </Slicer>
      </Side>
      <ReportMain>
        <Cards>
          {cards.map((c) => (
            <Card key={c.label} $gap={c.gap}>
              <CardValue>{c.value}</CardValue>
              <CardLabel>{c.label}</CardLabel>
            </Card>
          ))}
        </Cards>
        <TableVisual>
          <DataTable>
            <colgroup>
              {columns.map((c) => (
                <col key={c.name} width={c.w} />
              ))}
            </colgroup>
            <thead>
              <tr>
                {columns.map((c, i) => (
                  <Th key={c.name} scope="col">
                    {c.name}
                    {i === 0 && (
                      <SortMark>
                        <svg width="11" height="6" viewBox="0 0 11 6" fill={ink}>
                          <path d="M5.500 0 11 6H0z" />
                        </svg>
                      </SortMark>
                    )}
                  </Th>
                ))}
              </tr>
            </thead>
            <tbody>
              {rows.map(([idA, idB, ...cells], r) => (
                <Row key={idA} $alt={r % 2 === 1}>
                  <Td>
                    {idA}
                    <br />
                    {idB}
                  </Td>
                  {cells.map((cell, i) => (
                    <Td key={i} $num={i === 6}>
                      {cell}
                    </Td>
                  ))}
                </Row>
              ))}
            </tbody>
            <tfoot>
              <tr>
                {columns.map((c, i) => (
                  <TotalCell key={c.name} $num={i === 7}>
                    {i === 0 ? "Total" : i === 7 ? "824222" : ""}
                  </TotalCell>
                ))}
              </tr>
            </tfoot>
          </DataTable>
          <VScroll>
            <VThumb />
          </VScroll>
          <HScroll>
            <HThumb />
          </HScroll>
        </TableVisual>
      </ReportMain>
    </Report>
  </Page>
);

const PageTabs = () => (
  <PageBar>
    <ViewToggles>
      <ViewToggle $active aria-label="Desktop layout">
        <svg width="24" height="18" viewBox="0 0 24 18" fill="none" stroke="#484644" strokeWidth="1.500">
          <path d="M1 1h22v12H1zM12 13v4M8 17h8" />
        </svg>
      </ViewToggle>
      <ViewToggle aria-label="Mobile layout">
        <svg width="17" height="26" viewBox="0 0 17 26" fill="none" stroke="#484644" strokeWidth="1.700">
          <rect x="1" y="1" width="15" height="24" rx="1.500" />
          <path d="M7 21.500h3" />
        </svg>
      </ViewToggle>
      <Arrow aria-label="Previous page">
        <svg width="6" height="10" viewBox="0 0 6 10" fill="#c8c6c4">
          <path d="M6 0v10L0 5z" />
        </svg>
      </Arrow>
      <Arrow aria-label="Next page">
        <svg width="6" height="10" viewBox="0 0 6 10" fill="#c8c6c4">
          <path d="M0 0v10l6-5z" />
        </svg>
      </Arrow>
    </ViewToggles>
    <PageTab $w={94}>HOME</PageTab>
    <PageTab $w={128} $active>
      GRID VIEW
    </PageTab>
    <AddPage aria-label="New page">
      <svg width="14" height="14" viewBox="0 0 14 14" stroke="#fff" strokeWidth="4">
        <path d="M7 0v14M0 7h14" />
      </svg>
    </AddPage>
  </PageBar>
);

const TaskbarView = () => (
  <Taskbar>
    <Dock>
      <DockApp aria-label="Start">
        <WindowsLogo />
      </DockApp>
      <TaskSearch>
        <svg width="20" height="20" viewBox="0 0 20 20" fill="none" stroke="#e8e8e6" strokeWidth="2.200">
          <circle cx="8.500" cy="8.500" r="7" />
          <path d="m13.500 13.500 5 5" />
        </svg>
        <SearchInput $tone="#d6d7d3" placeholder="Search" aria-label="Search Windows" />
        <Birds />
      </TaskSearch>
      {dockApps.map((a) => (
        <DockApp key={a.name} aria-label={a.name} $active={a.active}>
          {a.icon}
          {a.running && <Running $on={a.active} />}
        </DockApp>
      ))}
    </Dock>
    <Tray>
      <svg width="14" height="8" viewBox="0 0 14 8" fill="none" stroke="#fff" strokeWidth="1.800">
        <path d="m1 7 6-6 6 6" />
      </svg>
      <svg width="41" height="20" viewBox="-16 0 41 20" fill="none">
        <rect width="15" height="20" rx="7" fill="#0a84ff" />
        <path d="m4 6.500 7 7-3.500 3.500V3l3.500 3.500-7 7" stroke="#fff" strokeWidth="1.300" />
      </svg>
      <TrayStack>
        ENG
        <br />
        IN
      </TrayStack>
      <svg width="28" height="16" viewBox="-6 0 28 16" fill="none" stroke="#fff" strokeWidth="1.700">
        <path d="M1 6c5-6 15-6 20 0M4 9c4-4 10-4 14 0M7 12c2-2 6-2 8 0" />
        <circle cx="11" cy="14" r="1.300" fill="#fff" />
      </svg>
      <svg width="20" height="18" viewBox="0 0 20 18" fill="none" stroke="#fff" strokeWidth="1.500">
        <path d="M1 6.500h3L9 2v14l-5-4.500H1z" />
        <path d="M11.500 6c1.500 2 1.500 4 0 6" />
        <path d="M14 3.500c3 4 3 7 0 11M17 1.500c4 5 4 10 0 15" stroke="#6b6e66" />
      </svg>
      <svg width="21" height="14" viewBox="0 0 21 14" fill="none" stroke="#fff" strokeWidth="1.500">
        <rect x="1" y="1" width="17" height="12" rx="3" />
        <rect x="3" y="3" width="9" height="8" rx="1" fill="#fff" stroke="none" />
        <path d="M19.500 5v4" strokeWidth="2" />
      </svg>
      <TrayStack $right>
        16:56
        <br />
        16-02-2024
      </TrayStack>
      <svg width="18" height="20" viewBox="0 0 18 20" fill="none">
        <path d="M2 9c0-9 12-9 12 0v3l2 4H0l2-4zM5 17h6c0 3-6 3-6 0z" fill="#fff" />
        <path d="M5.500 7h5L5.500 12h5" stroke="#22261a" strokeWidth="1.400" />
        <path d="M12 1h5l-4 5h5" stroke="#fff" strokeWidth="1.400" />
      </svg>
    </Tray>
  </Taskbar>
);

export default function App() {
  return (
    <Shell>
      <GlobalStyle />
      <Title />
      <RibbonBar />
      <Workspace>
        <ViewRail />
        <Center>
          <CanvasRow>
            <Canvas>
              <ReportPage />
            </Canvas>
            <Pane $white $w={41}>
              <Chevrons />
              <PaneTitle>
                <svg width="15" height="17" viewBox="0 0 15 17" fill="none" stroke="#323130" strokeWidth="1.400">
                  <path d="M14 1v15L7.500 10.500H1v-4h6.500z" />
                </svg>
                Filters
              </PaneTitle>
            </Pane>
          </CanvasRow>
          <PageTabs />
        </Center>
        <Pane $w={44}>
          <Chevrons />
          <PaneTitle>Visualizations</PaneTitle>
        </Pane>
        <Pane $w={43}>
          <Chevrons />
          <PaneTitle>Data</PaneTitle>
        </Pane>
      </Workspace>
      <StatusBar>
        <span>Page 2 of 2</span>
        <Zoom>
          <button aria-label="Zoom out">
            <svg width="11" height="11" viewBox="0 0 11 11" stroke="#605e5c" strokeWidth="2">
              <path d="M5 5.500h5" />
            </svg>
          </button>
          <ZoomSlider type="range" min={0} max={100} defaultValue={39} aria-label="Zoom level" />
          <button aria-label="Zoom in">
            <svg width="11" height="11" viewBox="0 0 11 11" stroke="#605e5c" strokeWidth="1.600">
              <path d="M0 5.500h10M5 .500v10" />
            </svg>
          </button>
          <ZoomValue>82%</ZoomValue>
          <button aria-label="Fit to page">
            <svg width="21" height="16" viewBox="0 0 21 16" fill="none" stroke="#605e5c" strokeWidth="1.400">
              <path d="M1 1h19v14H1zM4 6V4h3M14 4h3v2M17 10v2h-3M7 12H4v-2" />
            </svg>
          </button>
        </Zoom>
      </StatusBar>
      <TaskbarView />
    </Shell>
  );
}
